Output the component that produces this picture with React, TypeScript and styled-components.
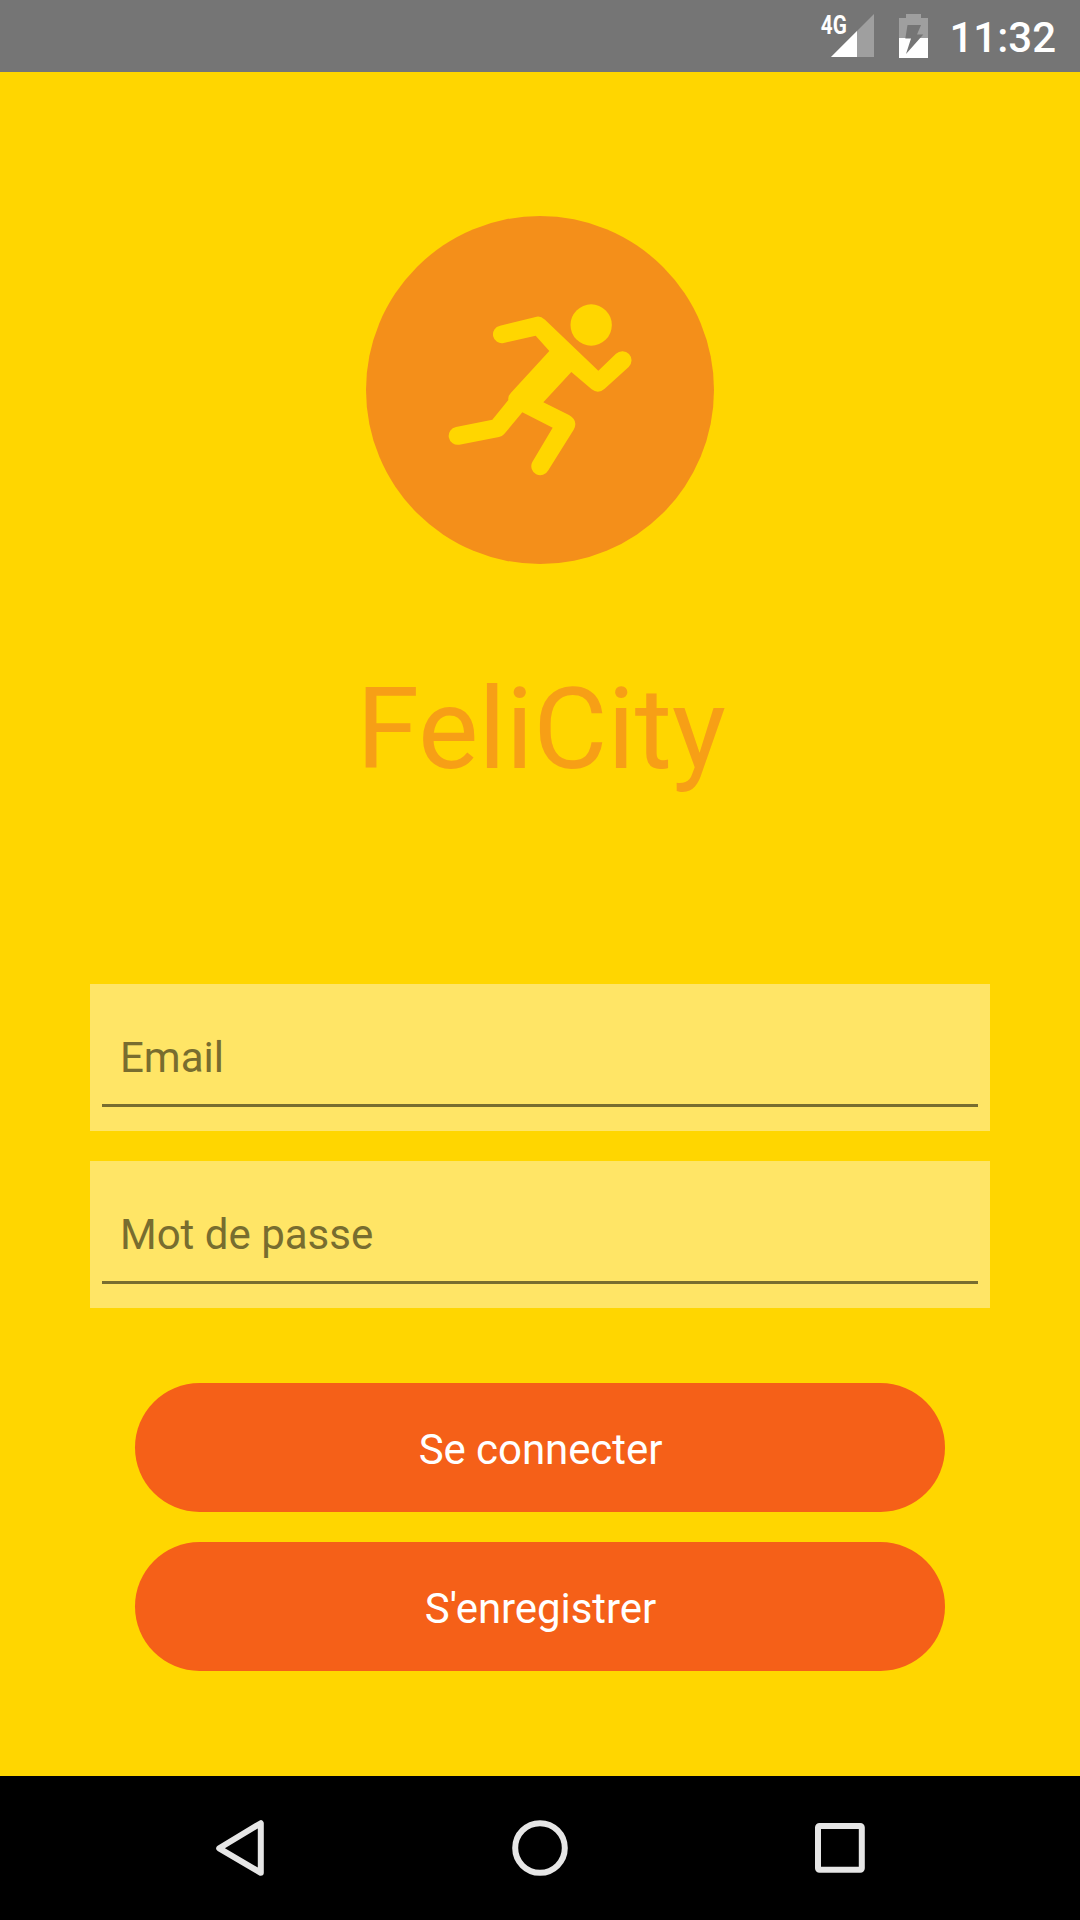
import React from "react";
import styled, { createGlobalStyle } from "styled-components";

const GlobalStyle = createGlobalStyle`
  * { box-sizing: border-box; }
  body { margin: 0; background: #ffd600; }
`;

const Screen = styled.div`
  width: 1080px;
  height: 1920px;
  display: flex;
  flex-direction: column;
  overflow: hidden;
  background: #ffd600;
  font-family: Roboto, "Liberation Sans", sans-serif;
  font-size: 42px;
  line-height: 50px;
`;

const StatusBar = styled.header`
  height: 72px;
  flex: none;
  display: flex;
  align-items: flex-start;
  justify-content: flex-end;
  padding-right: 24px;
  background: #757575;
`;

const SignalIcon = styled.svg`
  width: 60px;
  height: 72px;
  margin-right: 20px;
`;

const BatteryIcon = styled.svg`
  width: 36px;
  height: 72px;
  margin-right: 17px;
`;

const Clock = styled.span`
  width: 107px;
  padding-top: 13px;
  color: #fff;
  font-weight: 500;
  text-align: right;
  white-space: nowrap;
`;

const Content = styled.main`
  flex: 1;
  display: flex;
  flex-direction: column;
  align-items: center;
  padding-top: 144px;
`;

const Logo = styled.div`
  width: 348px;
  height: 348px;
  flex: none;
  display: flex;
  align-items: center;
  justify-content: center;
  border-radius: 50%;
  background: #f48f1a;
`;

const Title = styled.h1`
  margin: 98px 0 188px;
  padding-left: 2px;
  color: #f79f16;
  font-size: 114px;
  font-weight: 400;
  line-height: 134px;
  letter-spacing: -0.2px;
`;

const Form = styled.form`
  width: 900px;
  display: flex;
  flex-direction: column;
  gap: 30px;
`;

const Field = styled.label`
  height: 147px;
  padding: 49px 12px 24px;
  background: #ffe566;
`;

const FieldInner = styled.span`
  display: block;
  height: 74px;
  padding-left: 18px;
  border-bottom: 3px solid #786d2f;
  color: #786d2f;
`;

const Actions = styled.div`
  display: flex;
  flex-direction: column;
  gap: 30px;
  padding: 45px 45px 0;
`;

const ActionButton = styled.button`
  height: 129px;
  padding: 5px 0 0 1px;
  border: 0;
  border-radius: 64.5px;
  background: #f56018;
  color: #fff;
  font: inherit;
  letter-spacing: -0.06px;
`;

const NavBar = styled.nav`
  height: 144px;
  flex: none;
  display: grid;
  grid-template-columns: repeat(3, 300px);
  justify-content: center;
  align-items: center;
  justify-items: center;
  background: #000;
`;

const NavIcon = styled.svg`
  width: 72px;
  height: 72px;
  fill: none;
  stroke: #e6e6e6;
  stroke-width: 6;
  stroke-linejoin: round;
`;

const fields = ["Email", "Mot de passe"];
const actions = ["Se connecter", "S'enregistrer"];

function Signal() {
  return (
    <SignalIcon viewBox="816 0 60 72">
      <path d="M831 57 874 14V57Z" fill="#9f9f9f" />
      <path d="M831 57 857 31V57Z" fill="#fff" />
      <text x="820.8" y="33.5" fill="#fff" fontSize="26" fontWeight="700" textLength="26" lengthAdjust="spacingAndGlyphs">4G</text>
    </SignalIcon>
  );
}

function Battery() {
  return (
    <BatteryIcon viewBox="896 0 36 72">
      <path d="M906 14h15v4h7v20H899V18h7Z" fill="#9f9f9f" />
      <path d="M899 38h29v20H899Z" fill="#fff" />
      <path d="M907.5 25H921L917 34.5H923.3L906 54L911 38.5H905.3Z" fill="#757575" />
    </BatteryIcon>
  );
}

function Runner() {
  return (
    <svg width="220" height="220" viewBox="0 0 660 660" fill="#ffd600">
      <circle cx="483.5" cy="135" r="62" />
      <path d="M210 137 320 110Q331 107 345 119L505 272 558 221A26 26 0 0 1 596 261L524 326Q505 343 485 328L424 276 340 367 417 405Q446 422 431 449L355 571A26 26 0 0 1 307 546L368 443 277 397 222 463Q216 470 207 471L88 494A26 26 0 0 1 78 441L187 419 235 360Q233 348 243 338L358 213 317 167 221 189A26 26 0 0 1 210 137Z" />
    </svg>
  );
}

export default function App() {
  return (
    <>
      <GlobalStyle />
      <Screen>
        <StatusBar>
          <Signal />
          <Battery />
          <Clock>11:32</Clock>
        </StatusBar>
        <Content>
          <Logo><Runner /></Logo>
          <Title>FeliCity</Title>
          <Form onSubmit={(e) => e.preventDefault()}>
            {fields.map((name) => (
              <Field key={name}><FieldInner>{name}</FieldInner></Field>
            ))}
            <Actions>
              {actions.map((name) => (
                <ActionButton key={name} type="button">{name}</ActionButton>
              ))}
            </Actions>
          </Form>
        </Content>
        <NavBar>
          <NavIcon viewBox="204 1812 72 72"><path d="M260.8 1823.2V1872.8L219.2 1848.3Z" /></NavIcon>
          <NavIcon viewBox="504 1812 72 72"><circle cx="540" cy="1848" r="24.8" /></NavIcon>
          <NavIcon viewBox="804 1812 72 72"><rect x="818" y="1826" width="43.8" height="43.8" rx="1.5" /></NavIcon>
        </NavBar>
      </Screen>
    </>
  );
}
